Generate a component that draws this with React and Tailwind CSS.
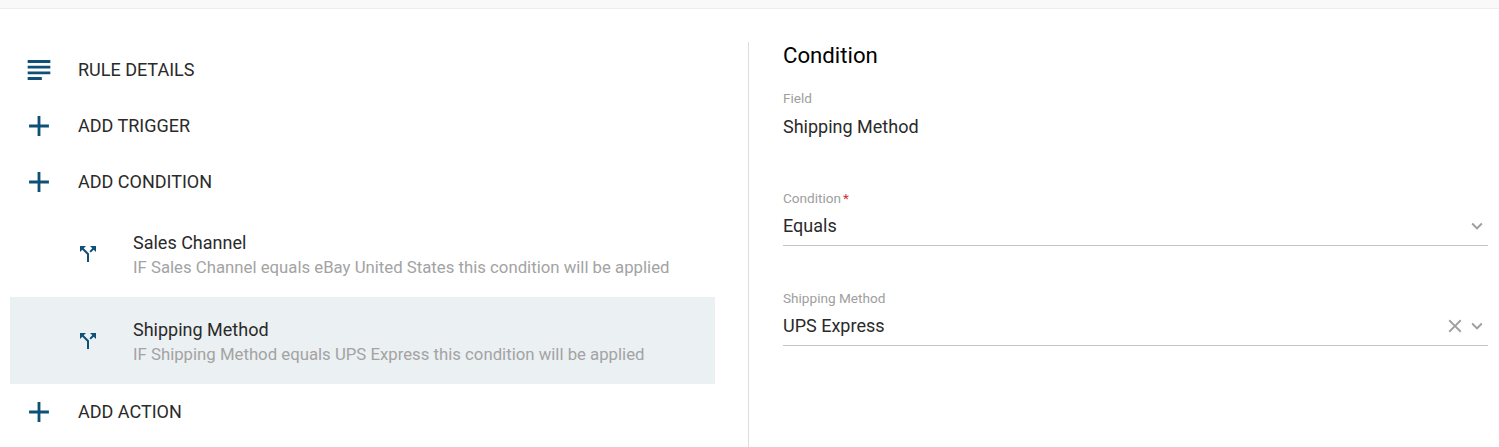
import React from 'react';

const SubjectIcon = () => (
  <svg viewBox="0 0 24 24" className="w-[34px] h-[34px] shrink-0 fill-[#0f5078]">
    <path d="M14 17H4v2h10v-2zm6-8H4v2h16V9zM4 15h16v-2H4v2zM4 5v2h16V5H4z" />
  </svg>
);

const AddIcon = () => (
  <svg viewBox="0 0 24 24" className="w-[34px] h-[34px] shrink-0 fill-[#0f5078]">
    <path d="M19 13h-6v6h-2v-6H5v-2h6V5h2v6h6v2z" />
  </svg>
);

const SplitIcon = () => (
  <svg viewBox="0 0 24 24" className="w-6 h-6 shrink-0 fill-[#0f5078]">
    <path d="M14 4l2.29 2.29-2.88 2.88 1.42 1.42 2.88-2.88L20 10V4h-6zm-4 0H4v6l2.29-2.29 4.71 4.7V20h2v-8.41l-5.29-5.3L10 4z" />
  </svg>
);

const ChevronIcon = () => (
  <svg viewBox="0 0 24 24" className="w-[22px] h-[22px] fill-[#9e9e9e]">
    <path d="M7.41 8.59 12 13.17l4.59-4.58L18 10l-6 6-6-6z" />
  </svg>
);

const ClearIcon = () => (
  <svg viewBox="0 0 24 24" className="w-[22px] h-[22px] fill-[#9e9e9e]">
    <path d="M19 6.41 17.59 5 12 10.59 6.41 5 5 6.41 10.59 12 5 17.59 6.41 19 12 13.41 17.59 19 19 17.59 13.41 12z" />
  </svg>
);

const ActionRow = ({ icon, label }) => (
  <div className="h-14 flex items-center pl-3">
    {icon}
    <span className="ml-[22px] text-[18px] leading-6 text-[#2a2a2a]">{label}</span>
  </div>
);

const ConditionRow = ({ title, text, selected }) => (
  <div className={`h-[87px] flex items-center pl-[66px] ${selected ? 'bg-[#ebf0f3]' : ''}`}>
    <SplitIcon />
    <div className="ml-[33px] pt-0.5 flex flex-col">
      <span className="text-[18px] leading-6 text-[#2a2a2a]">{title}</span>
      <span className="text-[16.75px] leading-6 text-[#a3a3a3]">{text}</span>
    </div>
  </div>
);

const SelectField = ({ label, required, value, clearable }) => (
  <div className="h-[100px] flex flex-col justify-end">
    <label className="mb-[3px] text-[13.6px] leading-4 text-[#9e9e9e]">
      {label}
      {required && <span className="ml-0.5 text-[#d32f2f]">*</span>}
    </label>
    <div className="h-[37px] flex items-center border-b border-[#c4c4c4] pb-[3px]">
      <span className="flex-1 text-[18px] text-[#2a2a2a]">{value}</span>
      {clearable && <ClearIcon />}
      <ChevronIcon />
    </div>
  </div>
);

export default function App() {
  return (
    <div className="h-[447px] overflow-hidden bg-white font-['Roboto',sans-serif]">
      <div className="h-[9px] bg-[#f9f9f9] border-b border-[#eeeeee]" />
      <div className="flex pt-[33px]">
        <div className="w-[705px] ml-2.5 shrink-0">
          <ActionRow icon={<SubjectIcon />} label="RULE DETAILS" />
          <ActionRow icon={<AddIcon />} label="ADD TRIGGER" />
          <ActionRow icon={<AddIcon />} label="ADD CONDITION" />
          <ConditionRow title="Sales Channel" text="IF Sales Channel equals eBay United States this condition will be applied" />
          <ConditionRow selected title="Shipping Method" text="IF Shipping Method equals UPS Express this condition will be applied" />
          <ActionRow icon={<AddIcon />} label="ADD ACTION" />
        </div>
        <div className="ml-[33px] h-[405px] flex-1 border-l border-[#dddddd] pl-[34px] pr-[11px]">
          <h2 className="-mt-px text-[22.2px] leading-7 text-black">Condition</h2>
          <div className="mt-[21px] text-[13.6px] leading-4 text-[#9e9e9e]">Field</div>
          <div className="mt-[9px] mb-[7px] text-[18px] leading-6 text-[#2a2a2a]">Shipping Method</div>
          <SelectField label="Condition" required value="Equals" />
          <SelectField label="Shipping Method" value="UPS Express" clearable />
        </div>
      </div>
    </div>
  );
}
